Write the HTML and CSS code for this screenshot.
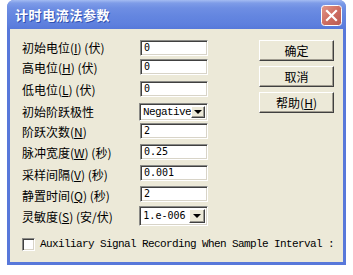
FILE: index.html
```html
<!DOCTYPE html>
<html>
<head>
<meta charset="utf-8">
<link rel="stylesheet" href="styles.css">
</head>
<body>
<div class="window">
  <div class="titlebar">
    <span class="title">计时电流法参数</span>
    <span class="close">
      <svg width="21" height="21" viewBox="0 0 21 21">
        <defs>
          <linearGradient id="cg" x1="0" y1="0" x2="1" y2="1">
            <stop offset="0" stop-color="#E39A8C"/>
            <stop offset="0.5" stop-color="#CF6E62"/>
            <stop offset="1" stop-color="#B95A52"/>
          </linearGradient>
        </defs>
        <rect x="0.5" y="0.5" width="20" height="20" rx="3" fill="url(#cg)" stroke="#fff"/>
        <path d="M6 6 L15 15 M15 6 L6 15" stroke="#fff" stroke-width="2.2" stroke-linecap="square"/>
      </svg>
    </span>
  </div>
  <div class="client">
    <div class="main">
      <div class="form">
        <div class="row r1"><span class="lbl">初始电位(<u>I</u>) (伏)</span><span class="field">0</span></div>
        <div class="row r2"><span class="lbl">高电位(<u>H</u>) (伏)</span><span class="field">0</span></div>
        <div class="row r3"><span class="lbl">低电位(<u>L</u>) (伏)</span><span class="field">0</span></div>
        <div class="row r4"><span class="lbl">初始阶跃极性</span><span class="select"><span class="val serif">Negative</span><span class="arrow"></span></span></div>
        <div class="row r5"><span class="lbl">阶跃次数(<u>N</u>)</span><span class="field">2</span></div>
        <div class="row r6"><span class="lbl">脉冲宽度(<u>W</u>) (秒)</span><span class="field">0.25</span></div>
        <div class="row r7"><span class="lbl">采样间隔(<u>V</u>) (秒)</span><span class="field">0.001</span></div>
        <div class="row r8"><span class="lbl">静置时间(<u>Q</u>) (秒)</span><span class="field">2</span></div>
        <div class="row r9"><span class="lbl">灵敏度(<u>S</u>) (安/伏)</span><span class="select tall"><span class="val">1.e-006</span><span class="arrow"></span></span></div>
      </div>
      <div class="buttons">
        <span class="btn">确定</span>
        <span class="btn">取消</span>
        <span class="btn">帮助(<u>H</u>)</span>
      </div>
    </div>
    <div class="check">
      <span class="box"></span>
      <span class="ctext">Auxiliary Signal Recording When Sample Interval :</span>
    </div>
  </div>
</div>
</body>
</html>
```

FILE: styles.css
```css
body {
  margin: 0;
  background: #fff;
  font-family: "Noto Sans CJK SC", sans-serif;
  font-size: 12px;
  color: #000;
}

.window {
  margin-left: 7px;
  width: 339px;
  box-sizing: border-box;
  padding: 0 3px 3px;
  background: #5878DA;
  border-radius: 7px 7px 0 0;
}

.titlebar {
  margin: 0 -3px;
  height: 29px;
  box-sizing: border-box;
  padding: 0 4px 0 8px;
  display: flex;
  align-items: center;
  justify-content: space-between;
  border-radius: 7px 7px 0 0;
  background: linear-gradient(#A4BCF2 0, #7E9CE8 3px, #6E8EE3 8px, #6486E0 16px, #5E80DE 24px, #5779DA 29px);
}

.title {
  color: #fff;
  font-weight: bold;
  font-size: 13px;
  letter-spacing: 0.6px;
  text-shadow: 1px 1px 0 #3050B0;
  line-height: 16px;
}

.close {
  display: flex;
  width: 21px;
  height: 21px;
  margin-top: 1px;
}

.client {
  height: 233px;
  background: #ECE9D8;
  box-sizing: border-box;
  padding: 11px 0 0 12px;
}

.main {
  display: flex;
}

.form {
  width: 186px;
  display: flex;
  flex-direction: column;
}

.row {
  display: flex;
  align-items: flex-start;
  height: 21px;
}

.r1 { height: 19px; }
.r2 { height: 22px; }
.r3 { height: 22px; }
.r4 { height: 20px; }
.r5 { height: 21px; }
.r6 { height: 21px; }
.r7 { height: 21px; }
.r8 { height: 20px; }

.lbl {
  width: 118px;
  line-height: 16px;
  margin-top: 0;
  white-space: pre;
}

.r2 .lbl, .r3 .lbl { margin-top: 1px; }
.r4 .lbl, .r5 .lbl, .r6 .lbl { margin-top: 1px; }
.r7 .lbl, .r8 .lbl { margin-top: 2px; }
.r9 .lbl { margin-top: 3px; }

u {
  text-decoration: underline;
  text-underline-offset: 1px;
}

.field, .select {
  width: 68px;
  height: 16px;
  box-sizing: border-box;
  background: #fff;
  border-top: 1px solid #8A8A86;
  border-left: 1px solid #8A8A86;
  border-right: 1px solid #fff;
  border-bottom: 1px solid #fff;
  box-shadow: inset 1px 1px 0 #404040, inset -1px -1px 0 #D8D4C8;
  font-family: "DejaVu Sans Mono", monospace;
  font-size: 10px;
  line-height: 14px;
  padding-left: 3px;
  white-space: nowrap;
}

.select {
  width: 69px;
  height: 18px;
  display: flex;
  align-items: center;
  padding: 2px 2px 2px 3px;
}

.select.tall {
  height: 20px;
}

.val {
  flex: 1;
  line-height: 14px;
}

.val.serif {
  font-family: "Liberation Mono", monospace;
  font-size: 11px;
  letter-spacing: -0.6px;
}

.arrow {
  width: 16px;
  height: 100%;
  box-sizing: border-box;
  background: #ECE9D8;
  border-top: 1px solid #fff;
  border-left: 1px solid #fff;
  border-right: 1px solid #404040;
  border-bottom: 1px solid #404040;
  box-shadow: inset -1px -1px 0 #9A9890;
  display: flex;
  align-items: center;
  justify-content: center;
}

.arrow::after {
  content: "";
  border-left: 4px solid transparent;
  border-right: 4px solid transparent;
  border-top: 4px solid #000;
}

.buttons {
  margin-left: 51px;
  display: flex;
  flex-direction: column;
  gap: 5px;
}

.btn {
  width: 75px;
  height: 21px;
  box-sizing: border-box;
  display: flex;
  align-items: center;
  justify-content: center;
  background: #ECE9D8;
  border-top: 1px solid #fff;
  border-left: 1px solid #fff;
  border-right: 1px solid #404040;
  border-bottom: 1px solid #404040;
  box-shadow: inset -1px -1px 0 #A09C90;
  font-size: 12px;
  line-height: 16px;
}

.check {
  display: flex;
  align-items: center;
  margin-top: 10px;
  width: 311px;
  overflow: hidden;
}

.box {
  flex: none;
  width: 13px;
  height: 13px;
  box-sizing: border-box;
  background: #fff;
  border-top: 1px solid #8A8A86;
  border-left: 1px solid #8A8A86;
  border-right: 1px solid #fff;
  border-bottom: 1px solid #fff;
  box-shadow: inset 1px 1px 0 #404040, inset -1px -1px 0 #D8D4C8;
}

.ctext {
  margin-left: 5px;
  font-family: "Liberation Mono", monospace;
  font-size: 11px;
  letter-spacing: -0.6px;
  white-space: nowrap;
  line-height: 14px;
}
```
